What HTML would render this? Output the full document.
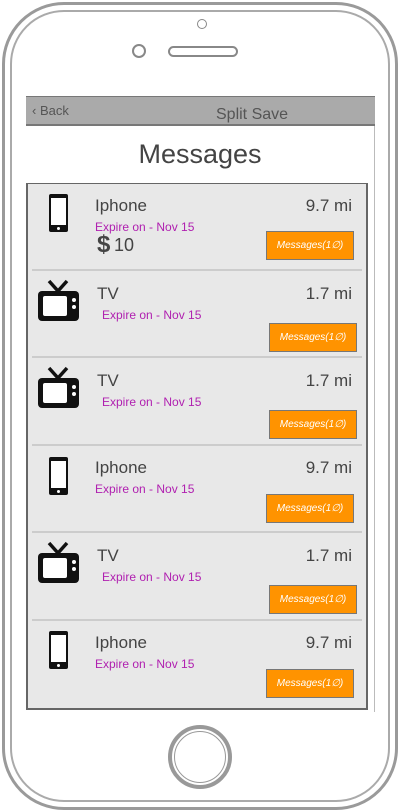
<!DOCTYPE html>
<html><head><style>
*{margin:0;padding:0;box-sizing:border-box}
body{width:400px;height:812px;background:#fff;position:relative;overflow:hidden;font-family:"Comic Sans MS","Liberation Sans",sans-serif;color:#444}
.a{position:absolute}
.frame{left:2px;top:2px;width:396px;height:808px;border:3px solid #9a9a9a;border-radius:62px}
.frame2{left:10px;top:10px;width:380px;height:792px;border:2px solid #aaa;border-radius:54px}
.nav{left:26px;top:96px;width:349px;height:30px;background:#aaa;border-top:1px solid #777;border-bottom:2px solid #777}
.list{left:26px;top:183px;width:342px;height:527px;background:#e8e8e8;border:2px solid #666;border-top-width:1px}
.sep{left:32px;width:330px;height:2px;background:#ccc}
.name{font-size:17px;color:#444}
.dist{font-size:17px;color:#444;right:48px;text-align:right}
.exp{font-size:12px;color:#b020b0}
.btn{width:88px;height:29px;background:#ff9300;border:1px solid #777;color:#fff;font-size:10px;text-align:center;line-height:27px;font-style:italic}
</style></head><body>
<div class="a frame"></div>
<div class="a frame2"></div>
<div class="a" style="left:197px;top:19px;width:10px;height:10px;border:1.5px solid #888;border-radius:50%"></div>
<div class="a" style="left:132px;top:44px;width:14px;height:14px;border:2px solid #888;border-radius:50%"></div>
<div class="a" style="left:168px;top:46px;width:70px;height:11px;border:2px solid #888;border-radius:6px"></div>
<div class="a" style="left:26px;top:126px;width:349px;height:586px;border-right:1px solid #bbb"></div>
<div class="a nav"></div>
<div class="a" style="left:32px;top:103px;font-size:13px;color:#555">‹ Back</div>
<div class="a" style="left:216px;top:106px;font-size:16px;color:#555">Split Save</div>
<div class="a" style="left:0;width:400px;top:139px;text-align:center;font-size:27px;color:#444">Messages</div>
<div class="a list"></div>
<div class="a sep" style="top:269px"></div>
<div class="a sep" style="top:356px"></div>
<div class="a sep" style="top:444px"></div>
<div class="a sep" style="top:531px"></div>
<div class="a sep" style="top:619px"></div>

<!-- phone icon template used via inline svgs -->
<svg class="a" style="left:48px;top:193px" width="21" height="40" viewBox="0 0 21 40"><rect x="1" y="1" width="19" height="38" rx="2" fill="#111"/><rect x="3" y="5" width="15" height="27" fill="#fff"/><circle cx="10.5" cy="35.5" r="1.5" fill="#fff"/></svg>
<div class="a name" style="left:95px;top:196px">Iphone</div>
<div class="a dist" style="top:196px">9.7 mi</div>
<div class="a exp" style="left:95px;top:220px">Expire on - Nov 15</div>
<div class="a" style="left:97px;top:231px;font-size:24px;font-weight:bold;color:#444">$</div>
<div class="a" style="left:114px;top:235px;font-size:18px;color:#444">10</div>
<div class="a btn" style="left:266px;top:231px">Messages(1∅)</div>

<svg class="a" style="left:36px;top:279px" width="45" height="44" viewBox="0 0 45 44"><path d="M13 2l9 10 9-10" stroke="#111" stroke-width="3.5" fill="none"/><rect x="2" y="12" width="41" height="30" rx="4" fill="#111"/><rect x="7" y="17" width="24" height="20" rx="2" fill="#fff"/><circle cx="38" cy="21" r="2" fill="#fff"/><circle cx="38" cy="28" r="2" fill="#fff"/></svg>
<div class="a name" style="left:97px;top:284px">TV</div>
<div class="a dist" style="top:284px">1.7 mi</div>
<div class="a exp" style="left:102px;top:308px">Expire on - Nov 15</div>
<div class="a btn" style="left:269px;top:323px">Messages(1∅)</div>

<svg class="a" style="left:36px;top:366px" width="45" height="44" viewBox="0 0 45 44"><path d="M13 2l9 10 9-10" stroke="#111" stroke-width="3.5" fill="none"/><rect x="2" y="12" width="41" height="30" rx="4" fill="#111"/><rect x="7" y="17" width="24" height="20" rx="2" fill="#fff"/><circle cx="38" cy="21" r="2" fill="#fff"/><circle cx="38" cy="28" r="2" fill="#fff"/></svg>
<div class="a name" style="left:97px;top:371px">TV</div>
<div class="a dist" style="top:371px">1.7 mi</div>
<div class="a exp" style="left:102px;top:395px">Expire on - Nov 15</div>
<div class="a btn" style="left:269px;top:410px">Messages(1∅)</div>

<svg class="a" style="left:48px;top:456px" width="21" height="40" viewBox="0 0 21 40"><rect x="1" y="1" width="19" height="38" rx="2" fill="#111"/><rect x="3" y="5" width="15" height="27" fill="#fff"/><circle cx="10.5" cy="35.5" r="1.5" fill="#fff"/></svg>
<div class="a name" style="left:95px;top:458px">Iphone</div>
<div class="a dist" style="top:458px">9.7 mi</div>
<div class="a exp" style="left:95px;top:482px">Expire on - Nov 15</div>
<div class="a btn" style="left:266px;top:494px">Messages(1∅)</div>

<svg class="a" style="left:36px;top:541px" width="45" height="44" viewBox="0 0 45 44"><path d="M13 2l9 10 9-10" stroke="#111" stroke-width="3.5" fill="none"/><rect x="2" y="12" width="41" height="30" rx="4" fill="#111"/><rect x="7" y="17" width="24" height="20" rx="2" fill="#fff"/><circle cx="38" cy="21" r="2" fill="#fff"/><circle cx="38" cy="28" r="2" fill="#fff"/></svg>
<div class="a name" style="left:97px;top:546px">TV</div>
<div class="a dist" style="top:546px">1.7 mi</div>
<div class="a exp" style="left:102px;top:570px">Expire on - Nov 15</div>
<div class="a btn" style="left:269px;top:585px">Messages(1∅)</div>

<svg class="a" style="left:48px;top:630px" width="21" height="40" viewBox="0 0 21 40"><rect x="1" y="1" width="19" height="38" rx="2" fill="#111"/><rect x="3" y="5" width="15" height="27" fill="#fff"/><circle cx="10.5" cy="35.5" r="1.5" fill="#fff"/></svg>
<div class="a name" style="left:95px;top:633px">Iphone</div>
<div class="a dist" style="top:633px">9.7 mi</div>
<div class="a exp" style="left:95px;top:657px">Expire on - Nov 15</div>
<div class="a btn" style="left:266px;top:669px">Messages(1∅)</div>

<div class="a" style="left:168px;top:725px;width:64px;height:64px;border:4px solid #999;border-radius:50%"></div>
<div class="a" style="left:174px;top:731px;width:52px;height:52px;border:1px solid #999;border-radius:50%"></div>
</body></html>
